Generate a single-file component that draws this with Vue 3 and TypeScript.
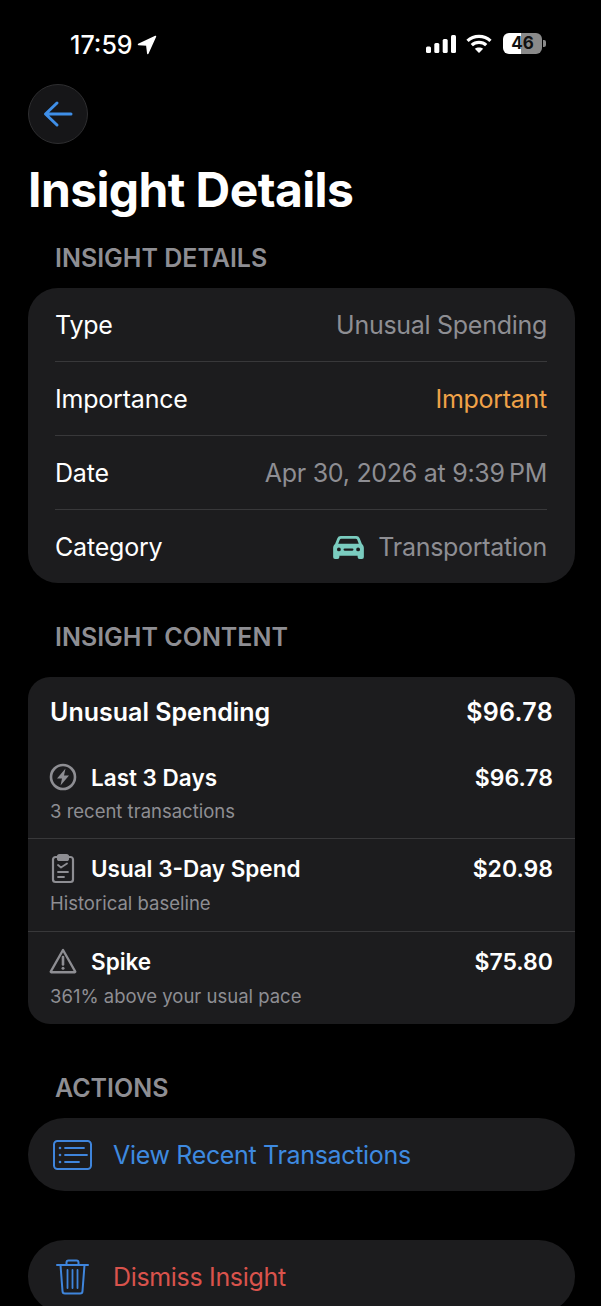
<script setup lang="ts">
const details = [
  { label: 'Type', value: 'Unusual Spending', tone: 'muted' },
  { label: 'Importance', value: 'Important', tone: 'orange' },
  { label: 'Date', value: 'Apr 30, 2026 at 9:39\u202fPM', tone: 'muted' },
]
</script>

<template>
  <div class="page">
    <div class="status">
      <div class="time">
        <span>17:59</span>
        <svg width="20" height="20" viewBox="0 0 20 20"><path d="M18.500 1.500 1.500 9.500l8.300.6 1 8.400z" fill="#fff" stroke="#fff" stroke-width="1.500" stroke-linejoin="round" /></svg>
      </div>
      <div class="sys">
        <svg width="30" height="18" viewBox="0 0 30 18" fill="#fff">
          <rect x="0" y="11.500" width="5" height="6.500" rx="1.500" />
          <rect x="8.300" y="8" width="5" height="10" rx="1.500" />
          <rect x="16.700" y="4" width="5" height="14" rx="1.500" />
          <rect x="25" y="0" width="5" height="18" rx="1.500" />
        </svg>
        <svg width="26" height="19" viewBox="0 0 26 19" fill="none" stroke="#fff" stroke-width="3.200">
          <path d="M1.500 6.800C7.800 .8 18.200 .8 24.500 6.800" />
          <path d="M5.800 11.200c4-3.800 10.400-3.800 14.400 0" />
          <path d="M13 19 8.800 14.800c2.300-1.800 6.100-1.800 8.400 0z" fill="#fff" stroke="none" />
        </svg>
        <div class="battery">
          <div class="battery-body"><span>46</span></div>
          <div class="battery-cap"></div>
        </div>
      </div>
    </div>

    <button class="back" aria-label="Back">
      <svg width="32" height="28" viewBox="0 0 32 28" fill="none" stroke="#3f8fe8" stroke-width="3" stroke-linecap="round" stroke-linejoin="round">
        <path d="M29 14H4M15 3 3.500 14 15 25" />
      </svg>
    </button>

    <h1>Insight Details</h1>

    <h2 class="first">INSIGHT DETAILS</h2>
    <section class="card details">
      <div v-for="d in details" :key="d.label" class="row">
        <span class="lbl">{{ d.label }}</span>
        <span :class="['val', d.tone]">{{ d.value }}</span>
      </div>
      <div class="row">
        <span class="lbl">Category</span>
        <span class="val muted cat">
          <svg width="31" height="24" viewBox="0 0 32 25">
            <path fill="#7accbf" fill-rule="evenodd" d="M8 1h16c1.800 0 3 .9 3.600 2.500L30 9.500c1.200 1 2 2.300 2 4V23a2 2 0 0 1-2 2h-2.500a2 2 0 0 1-2-2v-1.500h-19V23a2 2 0 0 1-2 2H2a2 2 0 0 1-2-2v-9.500c0-1.700.8-3 2-4l2.400-6C5 1.900 6.200 1 8 1zM8.500 3.800c-.8 0-1.300.4-1.600 1.100L5.300 9.200h21.400l-1.600-4.300c-.3-.7-.8-1.100-1.600-1.100zM6 13a2 2 0 1 0 0 4 2 2 0 0 0 0-4zm20 0a2 2 0 1 0 0 4 2 2 0 0 0 0-4zM12 14a1 1 0 0 0 0 2.400h8a1 1 0 0 0 0-2.400z" />
          </svg>
          Transportation
        </span>
      </div>
    </section>

    <h2 class="second">INSIGHT CONTENT</h2>
    <section class="card content">
      <div class="head">
        <span>Unusual Spending</span>
        <span class="head-amt">$96.78</span>
      </div>
      <div class="item">
        <div class="item-top">
          <svg class="ic" width="28" height="28" viewBox="0 0 28 28" fill="none" stroke="#8e8e93" stroke-width="2.600">
            <circle cx="14" cy="14" r="12" />
            <path d="M16.500 5.500 8 15.500h5l-1.500 7 8.500-10h-5z" fill="#8e8e93" stroke="none" />
          </svg>
          <span class="t">Last 3 Days</span>
          <span class="amt">$96.78</span>
        </div>
        <div class="sub">3 recent transactions</div>
      </div>
      <div class="item">
        <div class="item-top">
          <svg class="ic" width="28" height="32" viewBox="0 0 28 32" fill="none" stroke="#8e8e93" stroke-width="2.200" stroke-linecap="round" stroke-linejoin="round">
            <path d="M9 5H6.500A2.500 2.500 0 0 0 4 7.500v20A2.500 2.500 0 0 0 6.500 30h15a2.500 2.500 0 0 0 2.500-2.500v-20A2.500 2.500 0 0 0 21.500 5H19" />
            <rect x="9" y="3" width="10" height="5" rx="1.500" fill="#8e8e93" />
            <path d="m9 13 3 2.500 6-4M9 20h10M9 25h6" stroke-width="1.800" />
          </svg>
          <span class="t">Usual 3-Day Spend</span>
          <span class="amt">$20.98</span>
        </div>
        <div class="sub">Historical baseline</div>
      </div>
      <div class="item">
        <div class="item-top">
          <svg class="ic" width="28" height="26" viewBox="0 0 28 26" fill="none" stroke="#8e8e93" stroke-width="2.400" stroke-linejoin="round">
            <path d="M14 2 1.800 23.500a.5.5 0 0 0 .4.700h23.600a.5.5 0 0 0 .4-.700z" />
            <path d="M14 9v7.500" stroke-linecap="round" stroke-width="2.600" />
            <circle cx="14" cy="20.200" r="1.500" fill="#8e8e93" stroke="none" />
          </svg>
          <span class="t">Spike</span>
          <span class="amt">$75.80</span>
        </div>
        <div class="sub">361% above your usual pace</div>
      </div>
    </section>

    <h2 class="third">ACTIONS</h2>
    <div class="action">
      <svg width="39" height="30" viewBox="0 0 39 30" fill="none" stroke="#3f85dc" stroke-width="2" stroke-linecap="round">
        <rect x="1" y="1" width="37" height="28" rx="3.500" />
        <path d="M12 8h19M12 15h22M12 22h14" stroke-width="1.800" />
        <circle cx="7" cy="8" r="1.300" fill="#3f85dc" stroke="none" />
        <circle cx="7" cy="15" r="1.300" fill="#3f85dc" stroke="none" />
        <circle cx="7" cy="22" r="1.300" fill="#3f85dc" stroke="none" />
      </svg>
      <span class="blue">View Recent Transactions</span>
    </div>
    <div class="action danger">
      <svg width="39" height="36" viewBox="0 0 39 36" fill="none" stroke="#3f85dc" stroke-width="2" stroke-linecap="round" stroke-linejoin="round">
        <path d="M4 6h31M13.500 6V3.500A2 2 0 0 1 15.500 1.500h8a2 2 0 0 1 2 2V6" />
        <path d="M7.500 6l2 26a2.500 2.500 0 0 0 2.500 2.500h15a2.500 2.500 0 0 0 2.500-2.500l2-26" />
        <path d="M14.500 11v18M19.500 11v18M24.500 11v18" stroke-width="1.800" />
      </svg>
      <span class="red">Dismiss Insight</span>
    </div>
  </div>
</template>

<style>
html, body { margin: 0; background: #000; }
</style>

<style scoped>
.page {
  width: 601px;
  height: 1306px;
  overflow: hidden;
  background: #000;
  color: #fff;
  font-family: Inter, "Liberation Sans", sans-serif;
  padding: 0 26px 0 28px;
  box-sizing: border-box;
}
.status {
  height: 84px;
  box-sizing: border-box;
  padding: 30px 29px 0 42px;
  display: flex;
  justify-content: space-between;
  align-items: flex-start;
}
.time { display: flex; align-items: center; gap: 4px; font-size: 25px; font-weight: 500; line-height: 30px; }
.sys { display: flex; align-items: center; margin-top: 3px; }
.sys svg:first-child { margin-right: 10px; }
.sys svg:nth-child(2) { margin-right: 11px; }
.battery { display: flex; align-items: center; gap: 1px; }
.battery-body {
  width: 39px;
  height: 21px;
  border-radius: 6px;
  background: linear-gradient(90deg, #fff 46%, #8a8a8a 46%);
  color: #111;
  font-size: 17px;
  font-weight: 700;
  line-height: 21px;
  text-align: center;
}
.battery-cap { width: 3px; height: 7px; border-radius: 0 2px 2px 0; background: #8a8a8a; }
.back {
  display: flex;
  align-items: center;
  justify-content: center;
  width: 60px;
  height: 60px;
  padding: 0;
  border-radius: 50%;
  background: #161618;
  border: 1px solid #2e2e30;
}
h1 { margin: 15px 0 0; font-size: 48px; line-height: 62px; font-weight: 700; letter-spacing: -0.6px; }
h2 { margin: 0; padding-left: 27px; font-size: 25px; line-height: 30px; font-weight: 600; color: #8e8e93; }
.first { margin-top: 22px; margin-bottom: 15px; }
.second { margin-top: 39px; margin-bottom: 25px; }
.third { margin-top: 49px; margin-bottom: 15px; }
.card { background: #1c1c1e; }
.details { height: 295px; border-radius: 30px; padding: 0 28px 0 27px; box-sizing: border-box; }
.row {
  height: 74px;
  display: flex;
  align-items: center;
  justify-content: space-between;
  font-size: 25px;
  box-sizing: border-box;
  border-bottom: 1px solid #38383a;
}
.row:last-child { border-bottom: 0; height: 73px; }
.lbl { letter-spacing: -0.2px; }
.val { letter-spacing: -0.28px; }
.muted { color: #8e8e93; }
.orange { color: #f0a248; }
.cat { display: flex; align-items: center; gap: 14px; }
.content { height: 347px; border-radius: 22px; box-sizing: border-box; }
.head {
  height: 69px;
  padding: 0 22px;
  display: flex;
  justify-content: space-between;
  align-items: center;
  font-size: 25px;
  font-weight: 600;
}
.head-amt { letter-spacing: 0.3px; }
.item { height: 93px; box-sizing: border-box; border-bottom: 1px solid #38383a; padding-top: 13px; }
.head + .item { padding-top: 15px; }
.head + .item .sub { padding-top: 6px; }
.item:last-child { border-bottom: 0; }
.item-top { display: flex; align-items: center; height: 32px; padding: 0 22px 0 21px; }
.ic { flex: none; margin-right: 14px; }
.t { font-size: 22.500px; font-weight: 600; }
.amt { margin-left: auto; padding-top: 2px; font-size: 23px; font-weight: 600; }
.sub { padding: 7px 22px 0; font-size: 18.500px; line-height: 24px; color: #8e8e93; }
.action {
  height: 73px;
  border-radius: 36.500px;
  background: #1c1c1e;
  display: flex;
  align-items: center;
  padding-left: 25px;
  gap: 21px;
  font-size: 25px;
  letter-spacing: -0.33px;
}
.danger { margin-top: 49px; }
.blue { color: #3e8ae0; }
.red { color: #d9534c; }
</style>
